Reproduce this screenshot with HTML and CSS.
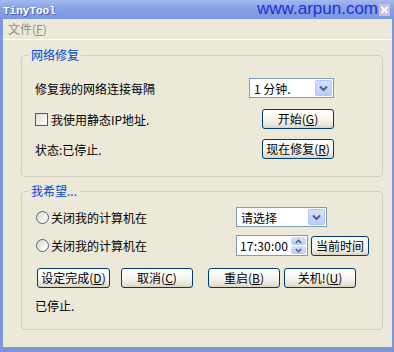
FILE: index.html
```html
<!DOCTYPE html>
<html>
<head>
<meta charset="utf-8">
<link rel="stylesheet" href="styles.css">
</head>
<body>
<div class="window">
  <div class="titlebar">
    <span class="title">TinyTool</span>
    <span class="watermark">www.arpun.com</span>
    <span class="close"><svg width="11" height="12" viewBox="0 0 11 12"><path d="M2.5 3 L8.5 9 M8.5 3 L2.5 9" stroke="#fff" stroke-width="2"/></svg></span>
  </div>
  <div class="frame">
    <div class="menubar"><span class="menu">文件(<u>F</u>)</span></div>
    <div class="client">
      <fieldset class="group g1">
        <legend>网络修复</legend>
        <div class="inner">
          <div class="row r1">
            <span>修复我的网络连接每隔</span>
            <div class="select s1"><span class="val">1 分钟.</span><span class="dd"><svg width="9" height="7" viewBox="0 0 9 7"><path d="M1 1.5 L4.5 5 L8 1.5" fill="none" stroke="#4d6185" stroke-width="2"/></svg></span></div>
          </div>
          <div class="row r2">
            <label class="check"><span class="box"></span>我使用静态IP地址.</label>
            <button class="btn">开始(<u>G</u>)</button>
          </div>
          <div class="row r3">
            <span>状态:已停止.</span>
            <button class="btn">现在修复(<u>R</u>)</button>
          </div>
        </div>
      </fieldset>
      <fieldset class="group g2">
        <legend>我希望...</legend>
        <div class="inner">
          <div class="grid">
            <label class="radio"><span class="dot"></span>关闭我的计算机在</label>
            <div class="select s2"><span class="val">请选择</span><span class="dd"><svg width="9" height="7" viewBox="0 0 9 7"><path d="M1 1.5 L4.5 5 L8 1.5" fill="none" stroke="#4d6185" stroke-width="2"/></svg></span></div>
            <label class="radio"><span class="dot"></span>关闭我的计算机在</label>
            <div class="timerow">
              <div class="time"><span class="val">17:30:00</span><span class="spin"><span class="sp"><svg width="7" height="5" viewBox="0 0 7 5"><path d="M0.8 4 L3.5 1.3 L6.2 4" fill="none" stroke="#4d6185" stroke-width="1.6"/></svg></span><span class="sp"><svg width="7" height="5" viewBox="0 0 7 5"><path d="M0.8 1 L3.5 3.7 L6.2 1" fill="none" stroke="#4d6185" stroke-width="1.6"/></svg></span></span></div>
              <button class="btn now">当前时间</button>
            </div>
          </div>
          <div class="btnrow">
            <button class="btn b1">设定完成(<u>D</u>)</button>
            <button class="btn b2">取消(<u>C</u>)</button>
            <button class="btn b3">重启(<u>B</u>)</button>
            <button class="btn b4">关机!(<u>U</u>)</button>
          </div>
          <div class="status">已停止.</div>
        </div>
      </fieldset>
    </div>
  </div>
</div>
</body>
</html>
```
FILE: styles.css
```css
* { box-sizing: border-box; }
html, body { margin: 0; padding: 0; }
body {
  width: 394px;
  height: 352px;
  overflow: hidden;
  font-family: "Noto Sans CJK SC", "Liberation Sans", sans-serif;
  font-size: 12px;
  color: #000;
  background: #ece9d8;
}
.window { width: 394px; height: 352px; display: flex; flex-direction: column; }
.titlebar {
  height: 19px;
  flex: none;
  background: linear-gradient(#a3baf0, #8aa3e5 40%, #7b97df);
  display: flex;
  align-items: center;
  position: relative;
}
.title {
  font-family: "Liberation Mono", monospace;
  font-weight: bold;
  font-size: 11px;
  color: #fff;
  text-shadow: 1px 1px 0 #4a5fa8;
  margin-left: 3px;
  margin-top: 2px;
}
.watermark {
  margin-left: auto;
  font-family: "Liberation Sans", Arial, sans-serif;
  font-size: 17px;
  line-height: 19px;
  color: #1f2fd6;
  margin-right: 1px;
  margin-top: -3px;
}
.close {
  width: 11px;
  height: 12px;
  background: #c9bfdc;
  display: flex;
  margin-right: 4px;
  margin-top: 1px;
}
.frame {
  flex: 1;
  border-left: 3px solid #7d96dd;
  border-right: 2px solid #7d96dd;
  border-bottom: 5px solid #7b94da;
  display: flex;
  flex-direction: column;
}
.menubar {
  height: 21px;
  border-bottom: 1px solid #fff;
  display: flex;
  align-items: center;
  padding-left: 5px;
  flex: none;
}
.menu { color: #8d8d8d; line-height: 14px; }
.client { padding-top: 8px; }
.group {
  margin: 0 0 0 18px;
  padding: 0;
  width: 362px;
  min-width: 0;
  border: 1px solid #d0d0bf;
  border-radius: 4px;
}
.group legend {
  margin-left: 7px;
  padding: 0 2px;
  line-height: 14px;
  color: #0046d5;
}
.g1 .inner { padding: 16px 48px 17px 13px; }
.row {
  height: 20px;
  display: flex;
  align-items: center;
  justify-content: space-between;
}
.r1 { margin-bottom: 11px; }
.r2 { margin-bottom: 10px; }
.select {
  height: 20px;
  border: 1px solid #7f9db9;
  background: #fff;
  display: flex;
  align-items: center;
  padding: 1px;
}
.select .val { flex: 1; padding-left: 3px; white-space: nowrap; }
.s1 { width: 85px; }
.s2 { width: 91px; }
.dd {
  width: 17px;
  height: 16px;
  border-radius: 2px;
  background: linear-gradient(#d5e1fc, #b9cdf7);
  border: 1px solid #b3c6f0;
  display: flex;
  align-items: center;
  justify-content: center;
}
.btn {
  font-family: inherit;
  font-size: 12px;
  color: #000;
  height: 20px;
  width: 72px;
  padding: 0;
  border: 1px solid #003c74;
  border-radius: 3px;
  background: linear-gradient(#ffffff, #f5f4ee 55%, #e3e0d3 90%, #d6d0c2);
  line-height: 16px;
}
.btn u { text-decoration: underline; }
.check, .radio { display: flex; align-items: center; white-space: nowrap; }
.box {
  width: 13px;
  height: 13px;
  border: 1px solid #41607e;
  background: linear-gradient(135deg, #dcdcd5, #f4f4f0 60%, #fff);
  margin-right: 3px;
}
.g2 { margin-top: 7px; }
.g2 .inner { padding: 9px 0 16px 13px; }
.grid {
  display: grid;
  grid-template-columns: 201px auto;
  grid-template-rows: 20px 21px;
  row-gap: 8px;
  align-items: center;
}
.radio { margin-left: 1px; }
.dot {
  width: 13px;
  height: 13px;
  border-radius: 50%;
  border: 1px solid #4b6684;
  background: linear-gradient(135deg, #d4d4cc, #f3f3ef 60%, #fff);
  margin-right: 2px;
}
.timerow { display: flex; align-items: center; gap: 3px; height: 21px; }
.time {
  width: 72px;
  height: 21px;
  border: 1px solid #7f9db9;
  background: #fff;
  display: flex;
  align-items: center;
  padding: 1px;
}
.time .val { flex: 1; padding-left: 2px; letter-spacing: 0.2px; }
.spin { width: 15px; height: 17px; display: flex; flex-direction: column; gap: 1px; }
.sp {
  flex: 1;
  border-radius: 2px;
  background: linear-gradient(#d5e1fc, #b9cdf7);
  display: flex;
  align-items: center;
  justify-content: center;
}
.now { width: 58px; height: 20px; }
.btnrow { display: flex; margin-top: 12px; height: 20px; }
.b1 { margin-left: 2px; width: 73px; }
.b2 { margin-left: 11px; }
.b3 { margin-left: 15px; }
.b4 { margin-left: 4px; }
.status { margin-top: 11px; line-height: 14px; }
```
